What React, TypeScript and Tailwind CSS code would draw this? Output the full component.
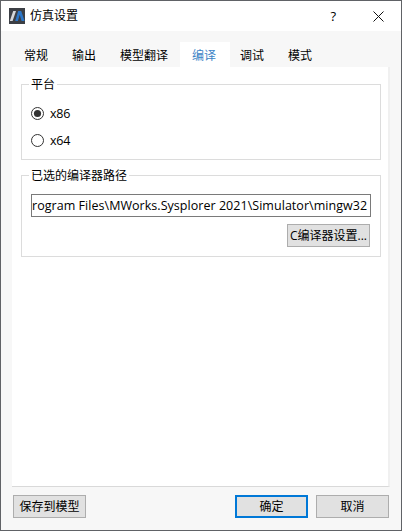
import type { ReactNode } from "react";

const tabs = [
  { label: "常规", width: "w-[48px]" },
  { label: "输出", width: "w-[48px]" },
  { label: "模型翻译", width: "w-[72px]" },
  { label: "编译", width: "w-[50px] pr-[2px]", active: true },
  { label: "调试", width: "w-[44px]" },
  { label: "模式", width: "w-[52px]" },
];

function Logo() {
  return (
    <svg width="16" height="16" viewBox="0 0 16 16" className="shrink-0">
      <rect width="16" height="16" fill="#3c3f45" />
      <path d="M0.8 13L4.2 3H7L3.6 13Z" fill="#d5d7da" />
      <path d="M6.2 13L9.2 3H12.2L15.6 13H12.6L10.7 6.8L8.9 13Z" fill="#2b76c8" />
    </svg>
  );
}

function Group({ title, className, children }: { title: string; className: string; children: ReactNode }) {
  return (
    <section className={`border border-[#dcdcdc] ${className}`}>
      <h2 className="-mt-[9px] ml-[7px] h-[18px] w-fit bg-white pr-[2px] pl-[2px] leading-[17px]">{title}</h2>
      {children}
    </section>
  );
}

function Radio({ label, checked = false }: { label: string; checked?: boolean }) {
  return (
    <label className="flex h-[27px] items-center gap-[6px]">
      <svg width="13" height="13" viewBox="0 0 13 13">
        <circle cx="6.5" cy="6.5" r="6" fill="white" stroke="#333333" />
        {checked && <circle cx="6.5" cy="6.5" r="3.6" fill="#333333" />}
      </svg>
      <span className="text-[12.5px] tracking-[-0.2px]">{label}</span>
    </label>
  );
}

function Button({ children, className }: { children: ReactNode; className: string }) {
  return (
    <button className={`flex h-[23px] items-center justify-center bg-[#e1e1e1] whitespace-nowrap ${className}`}>
      {children}
    </button>
  );
}

export default function App() {
  return (
    <main className="flex h-[531px] w-[402px] flex-col border border-[#606266] bg-[#f7f7f7] font-['Open_Sans','Noto_Sans_CJK_SC',sans-serif] text-[12px] leading-[16px] text-black">
      <header className="flex h-[30px] items-center bg-white pl-[8px]">
        <Logo />
        <h1 className="ml-[5px] flex-1">仿真设置</h1>
        <span className="mr-[37px] text-[13px] font-medium">?</span>
        <svg width="11" height="11" viewBox="0 0 11 11" className="mr-[17px]" stroke="#111" fill="none">
          <path d="M0.5 0.5L10.5 10.5M10.5 0.5L0.5 10.5" />
        </svg>
      </header>
      <nav className="mt-[11px] ml-[11px] flex h-[25px]">
        {tabs.map((tab) => (
          <div
            key={tab.label}
            className={`flex items-center justify-center pt-[3px] ${tab.width} ${tab.active ? "bg-white text-[#3b83c6]" : ""}`}
          >
            {tab.label}
          </div>
        ))}
      </nav>
      <div className="ml-[11px] h-[420px] w-[378px] border-r-2 border-b border-r-[#f0f0f0] border-b-[#d9d9d9] bg-white pt-[17px] pl-[9px]">
        <Group title="平台" className="h-[76px] w-[360px]">
          <div className="mt-[6px] ml-[9px]">
            <Radio label="x86" checked />
            <Radio label="x64" />
          </div>
        </Group>
        <Group title="已选的编译器路径" className="mt-[15px] h-[82px] w-[360px]">
          <div className="mt-[9px] ml-[9px] flex h-[23px] w-[340px] items-center overflow-hidden border border-[#7a7a7a] bg-white text-[12.5px] tracking-[0.04px] whitespace-nowrap">
            rogram Files\MWorks.Sysplorer 2021\Simulator\mingw32
          </div>
          <Button className="mt-[7px] ml-[265px] w-[83px] border border-[#adadad]">C编译器设置...</Button>
        </Group>
      </div>
      <footer className="mt-[8px] flex pl-[12px]">
        <Button className="w-[73px] border border-[#adadad]">保存到模型</Button>
        <Button className="ml-[149px] w-[73px] border-2 border-[#0078d7]">确定</Button>
        <Button className="ml-[8px] w-[73px] border border-[#adadad]">取消</Button>
      </footer>
    </main>
  );
}
